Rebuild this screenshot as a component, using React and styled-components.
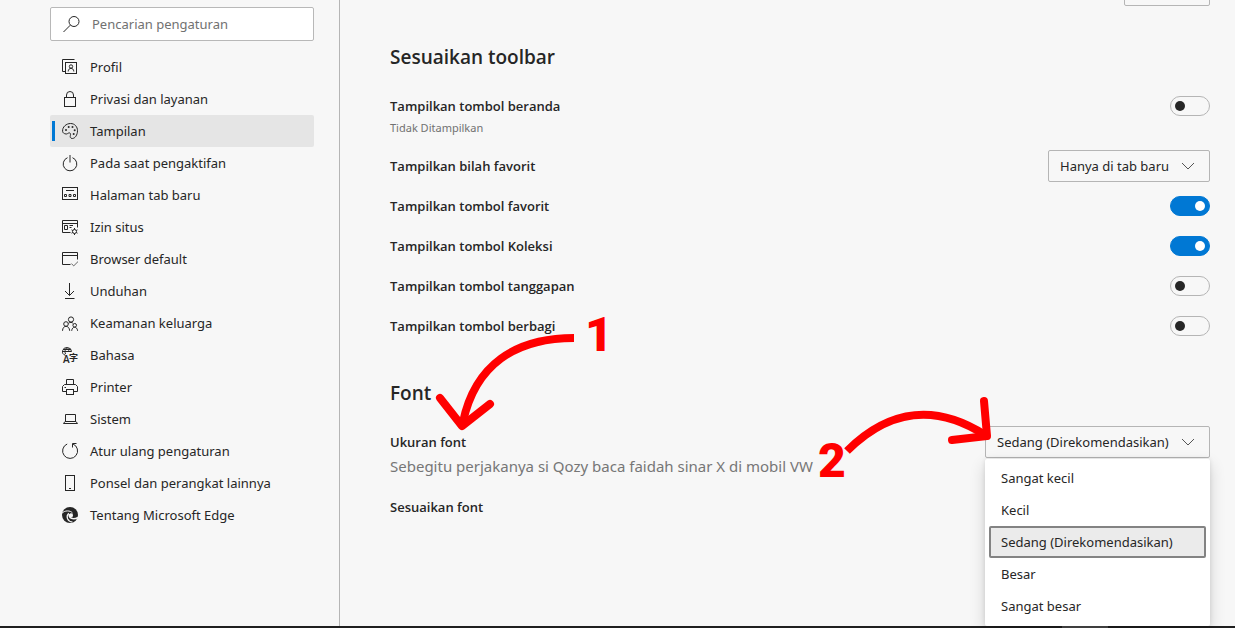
import React, { useState } from 'react';
import styled, { createGlobalStyle } from 'styled-components';

const GlobalStyle = createGlobalStyle`
  *, *::before, *::after {
    box-sizing: border-box;
  }
  body {
    margin: 0;
    background: #f7f7f7;
    color: #262626;
    font-family: "Noto Sans", sans-serif;
    font-size: 13px;
    line-height: 20px;
    overflow: hidden;
  }
  ul {
    list-style: none;
    margin: 0;
    padding: 0;
  }
`;

const Page = styled.div`
  min-height: 100vh;
  display: flex;
  flex-direction: column;
`;

const Wrapper = styled.div`
  flex: 1;
  display: flex;
`;

const Sidebar = styled.aside`
  flex: 0 0 340px;
  padding: 7px 25px 0 50px;
  border-right: 1px solid #b5b5b5;
`;

const SearchBox = styled.label`
  display: flex;
  align-items: center;
  gap: 13px;
  height: 34px;
  padding: 0 12px;
  background: #ffffff;
  border: 1px solid #b8b8b8;
  border-radius: 2px;
`;

const SearchInput = styled.input`
  flex: 1;
  min-width: 0;
  padding: 0;
  border: none;
  outline: none;
  background: none;
  font: inherit;
  color: inherit;

  &::placeholder {
    color: #717171;
    opacity: 1;
  }
`;

const Icon = styled.svg`
  flex: none;
  width: 16px;
  height: 16px;
  fill: none;
  stroke: #262626;
  overflow: visible;
`;

const Menu = styled.ul`
  && {
    margin-top: 10px;
  }
`;

const MenuLink = styled.a`
  position: relative;
  display: flex;
  align-items: center;
  gap: 12px;
  height: 32px;
  padding: 0 12px;
  border-radius: 2px;
  color: inherit;
  text-decoration: none;
  background: ${props => (props.$active ? '#e5e5e5' : 'transparent')};

  &::before {
    content: "";
    display: ${props => (props.$active ? 'block' : 'none')};
    position: absolute;
    left: 2px;
    top: 6px;
    width: 3px;
    height: 20px;
    background: #0078d4;
  }
`;

const Main = styled.main`
  position: relative;
  flex: 1;
  padding: 0 25px 0 50px;
`;

const TopBar = styled.div`
  display: flex;
  justify-content: flex-end;
  height: 6px;
  align-items: flex-end;
  overflow: hidden;
`;

const Button = styled.button`
  flex: none;
  width: 86px;
  height: 32px;
  background: none;
  border: 1px solid #b5b5b5;
  border-radius: 2px;
`;

const Title = styled.h2`
  margin: ${props => props.$top}px 0 13px;
  font-family: "Open Sans", sans-serif;
  font-size: 19px;
  line-height: 32px;
  font-weight: 600;
`;

const Row = styled.div`
  display: flex;
  justify-content: space-between;
  align-items: flex-start;
  padding: 4px 0;
`;

const Info = styled.div`
  padding: 6px 0;
`;

const Label = styled.label`
  display: block;
  font-family: "Open Sans", sans-serif;
  font-weight: 600;
`;

const Hint = styled.div`
  margin-top: 4px;
  font-size: 11px;
  line-height: 16px;
  color: #717171;
`;

const Sample = styled.div`
  margin-top: 4px;
  font-size: 15px;
  line-height: 21px;
  color: #767676;
`;

const Control = styled.div`
  position: relative;
  display: flex;
  align-items: center;
  height: 32px;
`;

const Switch = styled.input`
  appearance: none;
  display: flex;
  align-items: center;
  width: 40px;
  height: 20px;
  margin: 0;
  padding: 0 4px;
  border: 1px solid #b5b5b5;
  border-radius: 10px;

  &::before {
    content: "";
    width: 10px;
    height: 10px;
    border-radius: 50%;
    background: #262626;
  }

  &:checked {
    justify-content: flex-end;
    background: #0078d4;
    border-color: #0078d4;
  }

  &:checked::before {
    background: #ffffff;
  }
`;

const Select = styled.select`
  appearance: none;
  width: ${props => props.$width}px;
  height: 32px;
  padding: 0 11px;
  background: transparent;
  border: 1px solid #b5b5b5;
  border-radius: 2px;
  font: inherit;
  color: inherit;
`;

const Chevron = styled(Icon)`
  position: absolute;
  right: 14px;
  top: 8px;
  pointer-events: none;
`;

const Popup = styled.ul`
  position: absolute;
  z-index: 1;
  top: 33px;
  right: 0;
  width: 100%;
  && {
    padding: 3px 4px 4px;
  }
  background: #ffffff;
  border-radius: 2px;
  box-shadow: 0 6px 16px rgba(0, 0, 0, 0.16), 0 0 4px rgba(0, 0, 0, 0.1);
`;

const PopupItem = styled.li`
  height: 32px;
  padding: 0 10px;
  border: 2px solid ${props => (props.$selected ? '#838383' : 'transparent')};
  border-radius: 2px;
  background: ${props => (props.$selected ? '#ebebeb' : 'transparent')};
  line-height: 28px;
`;

const Annotation = styled.svg`
  position: absolute;
  z-index: 2;
  fill: none;
  stroke: #ff0000;
  stroke-width: 8;
  pointer-events: none;
  overflow: visible;

  text {
    fill: #ff0000;
    stroke: none;
    font-family: Roboto, sans-serif;
    font-size: 48px;
    font-weight: 900;
  }
`;

const FirstArrow = styled(Annotation)`
  left: 90px;
  top: 300px;
`;

const SecondArrow = styled(Annotation)`
  right: 235px;
  top: 390px;
`;

const Taskbar = styled.div`
  height: 2px;
  display: flex;
  justify-content: flex-end;
  padding-right: 127px;
  background: #1f1f1f;
`;

const TaskbarItem = styled.div`
  width: 46px;
  background: #4a4a4a;
`;

const icons = {
  profile: (
    <>
      <path d="M.5 12.5V.5h12M.5 12.5H3" />
      <rect x="3.5" y="3.5" width="11" height="11" />
      <circle cx="9" cy="7.5" r="1.7" />
      <path d="M6.200 12.500c0-4.200 5.600-4.200 5.600 0" />
    </>
  ),
  lock: (
    <>
      <rect x="2.5" y="6.5" width="11" height="9" />
      <path d="M4.500 6.500V4a3.500 3.500 0 0 1 7 0v2.500" />
    </>
  ),
  palette: (
    <>
      <path d="M.6 8.300C.2 4 4.300.5 8.500.5c4.400 0 7 3.400 7 7.200 0 4.300-2.500 7.800-5.200 7.800-2 0-2.400-1.600-1.900-3.100.5-1.600-.1-2.700-1.400-2.500-1.200.2-1.700 1.300-3 1.100C1.900 10.700.8 9.800.6 8.300z" />
      <g fill="#262626" stroke="none">
        <circle cx="4" cy="7" r="1" />
        <circle cx="6.700" cy="4" r="1" />
        <circle cx="10.500" cy="4" r="1" />
        <circle cx="12.700" cy="7.200" r="1" />
        <circle cx="11.700" cy="11" r="1" />
      </g>
    </>
  ),
  power: (
    <>
      <path d="M5.500 2.700a6.800 6.800 0 1 0 5 0" />
      <path d="M8 0v7.500" />
    </>
  ),
  newTab: (
    <>
      <rect x=".5" y=".5" width="15" height="12" />
      <path d="M4 3.500h8" />
      <path d="M2.500 7.500h2v2h-2zM7 7.500h2v2H7zM11.500 7.500h2v2h-2z" />
    </>
  ),
  site: (
    <>
      <path d="M8.500 13.500h-8v-12h15v7M.5 4.500h15" />
      <path d="M2.500 6.500h3v4h-3zM7.500 6.500H11M7.500 8.500h2" />
      <circle cx="12.5" cy="12.5" r="2" />
      <path d="M12.500 9v1.500M12.500 14.500V16M9.500 10.800l1.300.7M14.200 13.500l1.300.7M9.500 14.200l1.300-.7M14.200 11.500l1.300-.7" />
    </>
  ),
  browser: (
    <>
      <path d="M8.500 13.500h-8v-12h15v7M.5 4.500h15" />
      <path d="M9.300 12.500l2.400 2.400 4.300-4.300" stroke="#666666" />
    </>
  ),
  download: (
    <>
      <path d="M7.500 0v12.500M3 8l4.500 4.500L12 8" />
      <path d="M3 15.500h9.500" />
    </>
  ),
  family: (
    <>
      <circle cx="9" cy="4.500" r="2.600" />
      <circle cx="4" cy="9" r="2.300" />
      <circle cx="12.700" cy="10.300" r="1.800" />
      <path d="M.5 15.800c.2-6 6.800-6 7.200 0M9.700 15.800c.3-4.700 5.500-4.700 5.900 0M6.500 8.300C7.800 7 10.300 7 11.300 8.700" />
    </>
  ),
  printer: (
    <>
      <path d="M4.500 5.500v-5h7v5M4.500 12.500h-4v-5l2-2h11l2 2v5h-4" />
      <rect x="4.5" y="10.5" width="7" height="5" />
      <path d="M2.500 8.500H4" />
    </>
  ),
  system: (
    <path d="M3.500 10V3.500h10V10M3 10.500h11l1.500 2h-14z" />
  ),
  reset: (
    <>
      <path d="M5.200 1a7.500 7.500 0 1 0 5.800 0" />
      <path d="M10.500 4.500v-4h4" />
    </>
  ),
  phone: (
    <>
      <rect x="3.5" y=".5" width="9" height="15" />
      <path d="M7 13.500h2" />
    </>
  ),
  edge: (
    <>
      <circle cx="8" cy="8" r="8" fill="#262626" stroke="none" />
      <path d="M-.3 6.500C2.500 3 8.500 3.300 10.500 6" stroke="#f7f7f7" strokeWidth="1" />
      <path d="M10.500 15C5.500 14.500 3.500 9.500 6.800 6.300" stroke="#f7f7f7" strokeWidth="1.200" />
      <path d="M7.300 7.200c-.8 4 3.700 6 8.700 3.300" stroke="#f7f7f7" strokeWidth="1.500" />
      <path d="M7 8c.7-2.500 4-2.500 4 .2 0 1.200-.8 1.600-.4 2.400C8.500 10.500 7 9.500 7 8z" fill="#f7f7f7" stroke="none" />
    </>
  ),
};

const LanguageText = styled.text`
  fill: #262626;
  stroke: none;
  font-family: "Open Sans", "Noto Sans CJK SC", sans-serif;
  font-size: ${props => props.$size}px;
  font-weight: 600;
`;

icons.language = (
  <>
    <path d="M9.500 4.500a4.500 4 0 1 0-6 3.800M.5 4.500h9M1.200 2.500h7.600M5 .5C2.700 2.500 2.700 5 3.500 7M5 .5C6.500 1.800 6.800 3 6.800 5" />
    <LanguageText x="1" y="16" $size={10}>A</LanguageText>
    <LanguageText x="7" y="14" $size={9}>字</LanguageText>
  </>
);

const menu = [
  { icon: 'profile', text: 'Profil' },
  { icon: 'lock', text: 'Privasi dan layanan' },
  { icon: 'palette', text: 'Tampilan', active: true },
  { icon: 'power', text: 'Pada saat pengaktifan' },
  { icon: 'newTab', text: 'Halaman tab baru' },
  { icon: 'site', text: 'Izin situs' },
  { icon: 'browser', text: 'Browser default' },
  { icon: 'download', text: 'Unduhan' },
  { icon: 'family', text: 'Keamanan keluarga' },
  { icon: 'language', text: 'Bahasa' },
  { icon: 'printer', text: 'Printer' },
  { icon: 'system', text: 'Sistem' },
  { icon: 'reset', text: 'Atur ulang pengaturan' },
  { icon: 'phone', text: 'Ponsel dan perangkat lainnya' },
  { icon: 'edge', text: 'Tentang Microsoft Edge' },
];

const fontSizes = ['Sangat kecil', 'Kecil', 'Sedang (Direkomendasikan)', 'Besar', 'Sangat besar'];

function ChevronIcon() {
  return (
    <Chevron viewBox="0 0 16 16">
      <path d="M2 5l6 6 6-6" stroke="#555555" />
    </Chevron>
  );
}

function SwitchRow({ id, label, hint, on }) {
  return (
    <Row>
      <Info>
        <Label htmlFor={id}>{label}</Label>
        {hint && <Hint>{hint}</Hint>}
      </Info>
      <Control>
        <Switch type="checkbox" role="switch" id={id} defaultChecked={on} />
      </Control>
    </Row>
  );
}

function App() {
  const [fontSize, setFontSize] = useState(fontSizes[2]);

  return (
    <Page>
      <GlobalStyle />
      <Wrapper>
        <Sidebar>
          <SearchBox>
            <Icon viewBox="0 0 16 16">
              <circle cx="11" cy="5.500" r="5" />
              <path d="M7.400 9.100L.5 16" />
            </Icon>
            <SearchInput type="search" placeholder="Pencarian pengaturan" aria-label="Pencarian pengaturan" />
          </SearchBox>
          <nav>
            <Menu>
              {menu.map(item => (
                <li key={item.icon}>
                  <MenuLink href={`#${item.icon}`} $active={item.active}>
                    <Icon viewBox="0 0 16 16">{icons[item.icon]}</Icon>
                    {item.text}
                  </MenuLink>
                </li>
              ))}
            </Menu>
          </nav>
        </Sidebar>
        <Main>
          <TopBar>
            <Button type="button" />
          </TopBar>
          <Title $top={35}>Sesuaikan toolbar</Title>
          <SwitchRow id="home" label="Tampilkan tombol beranda" hint="Tidak Ditampilkan" />
          <Row>
            <Info>
              <Label htmlFor="favorites-bar">Tampilkan bilah favorit</Label>
            </Info>
            <Control>
              <Select id="favorites-bar" $width={162}>
                <option>Hanya di tab baru</option>
              </Select>
              <ChevronIcon />
            </Control>
          </Row>
          <SwitchRow id="favorites" label="Tampilkan tombol favorit" on />
          <SwitchRow id="collections" label="Tampilkan tombol Koleksi" on />
          <SwitchRow id="feedback" label="Tampilkan tombol tanggapan" />
          <SwitchRow id="share" label="Tampilkan tombol berbagi" />

          <Title $top={31}>Font</Title>
          <Row>
            <Info>
              <Label htmlFor="font-size">Ukuran font</Label>
              <Sample>Sebegitu perjakanya si Qozy baca faidah sinar X di mobil VW</Sample>
            </Info>
            <Control>
              <Select
                id="font-size"
                $width={225}
                value={fontSize}
                onChange={e => setFontSize(e.target.value)}
              >
                {fontSizes.map(size => (
                  <option key={size}>{size}</option>
                ))}
              </Select>
              <ChevronIcon />
              <Popup role="listbox" aria-label="Ukuran font">
                {fontSizes.map(size => (
                  <PopupItem
                    key={size}
                    role="option"
                    aria-selected={size === fontSize}
                    $selected={size === fontSize}
                    onClick={() => setFontSize(size)}
                  >
                    {size}
                  </PopupItem>
                ))}
              </Popup>
            </Control>
          </Row>
          <Row>
            <Info>
              <Label as="div">Sesuaikan font</Label>
            </Info>
          </Row>

          <FirstArrow width="200" height="135" viewBox="430 300 200 135">
            <path d="M574 338C515 338 475 365 463 422" />
            <path d="M440 398l22 28 28-22" strokeLinecap="round" strokeLinejoin="round" />
            <text x="585" y="351">1</text>
          </FirstArrow>
          <SecondArrow width="190" height="95" viewBox="810 390 190 95">
            <path d="M847 451C891 407 938 405 985 435" />
            <path d="M984 401l3 35-35 4" strokeLinecap="round" strokeLinejoin="round" />
            <text x="818" y="477">2</text>
          </SecondArrow>
        </Main>
      </Wrapper>
      <Taskbar>
        <TaskbarItem />
      </Taskbar>
    </Page>
  );
}

export default App;
